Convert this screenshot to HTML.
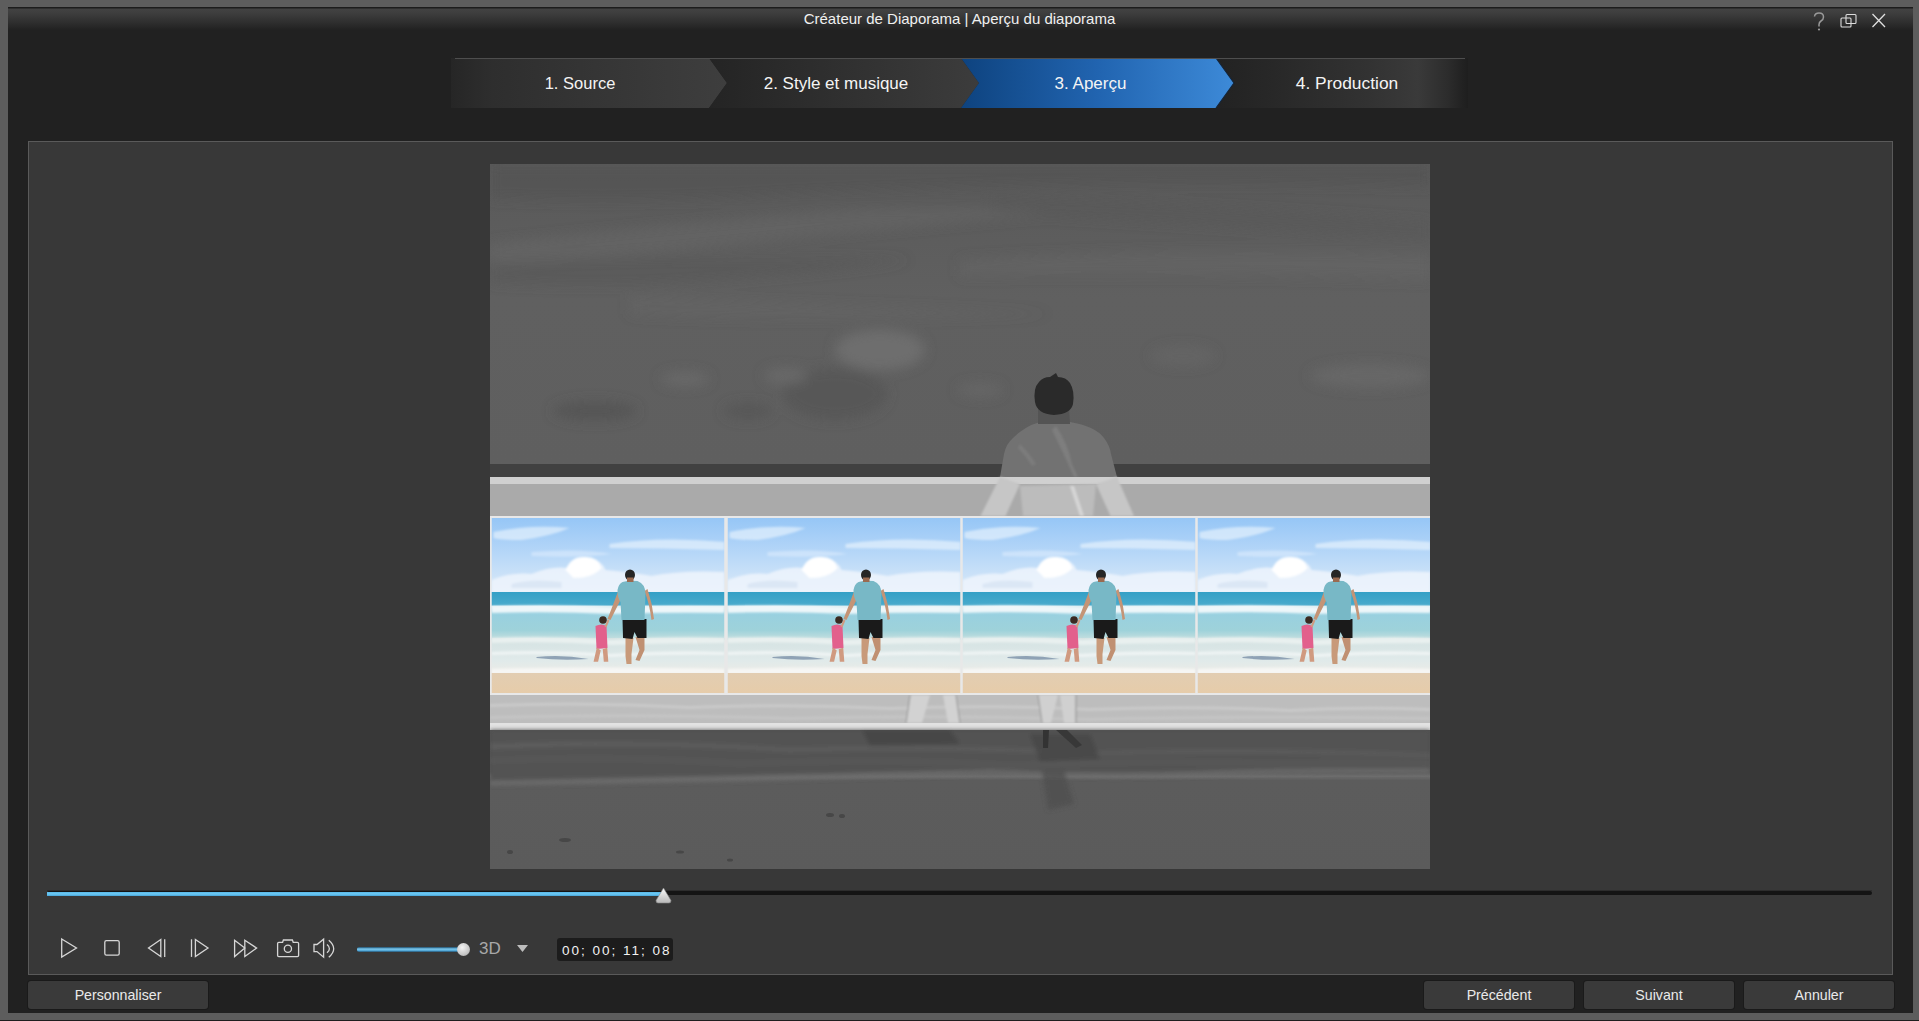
<!DOCTYPE html>
<html><head><meta charset="utf-8">
<style>
*{margin:0;padding:0;box-sizing:border-box}
html,body{width:1919px;height:1021px;overflow:hidden;background:#5d5d5d;font-family:"Liberation Sans",sans-serif}
.a{position:absolute}
#win{left:8px;top:7px;width:1905px;height:1006px;background:#212121}
#tb{left:8px;top:7px;width:1905px;height:23px;background:linear-gradient(#1c1c1c 0,#1c1c1c 1px,#424242 2px,#3e3e3e 6px,#343434 12px,#2a2a2a 18px,#212121 23px)}
#title{left:0;top:11px;width:1919px;text-align:center;color:#f0f0f0;font-size:15px;line-height:16px}
.step{top:59px;height:50px;color:#f4f4f4;font-size:17px;line-height:49px;text-align:center}
#panel{left:28px;top:141px;width:1865px;height:834px;background:#383838;border:1px solid #5a5a5a}
.btn{top:981px;height:28px;background:#3a3a3a;border-radius:3px;color:#eaeaea;font-size:14.2px;line-height:29px;text-align:center;box-shadow:0 0 0 1px #1a1a1a}
</style></head><body>
<div class="a" id="win"></div>
<div class="a" style="left:0;top:1020px;width:1919px;height:1px;background:#1e1e1e"></div>
<div class="a" id="tb"></div>
<div class="a" id="title">Créateur de Diaporama | Aperçu du diaporama</div>

<!-- window controls -->
<svg class="a" style="left:1800px;top:5px" width="100" height="30" viewBox="0 0 100 30">
  <path d="M14.5 11.5 Q15 8 19 8 Q23.5 8 23.5 12 Q23.5 14.5 21 16 Q19 17.3 19 19.5 L19 21.5" fill="none" stroke="#9a9a9a" stroke-width="1.5"/>
  <circle cx="19" cy="24.5" r="1.1" fill="#9a9a9a"/>
  <rect x="46" y="9.5" width="10" height="9" rx="1" fill="none" stroke="#dcdcdc" stroke-width="1.1"/>
  <rect x="41" y="13" width="10" height="9" rx="1" fill="none" stroke="#dcdcdc" stroke-width="1.1"/>
  <path d="M72.5 9 L85 22 M85 9 L72.5 22" stroke="#e0e0e0" stroke-width="1.3"/>
</svg>

<!-- steps -->
<svg class="a" style="left:440px;top:50px" width="1040" height="66" viewBox="440 50 1040 66">
  <defs>
    <linearGradient id="g1" x1="0" x2="1"><stop offset="0" stop-color="#262626"/><stop offset="0.15" stop-color="#2e2e2e"/><stop offset="1" stop-color="#3e3e3e"/></linearGradient>
    <linearGradient id="g2" x1="0" x2="1"><stop offset="0" stop-color="#242424"/><stop offset="1" stop-color="#3c3c3c"/></linearGradient>
    <linearGradient id="g3" x1="0" x2="1"><stop offset="0" stop-color="#0e437f"/><stop offset="0.5" stop-color="#2164b0"/><stop offset="1" stop-color="#3d8ad8"/></linearGradient>
    <linearGradient id="g4" x1="0" x2="1"><stop offset="0" stop-color="#222"/><stop offset="0.3" stop-color="#2a2a2a"/><stop offset="0.6" stop-color="#323232"/><stop offset="0.8" stop-color="#3a3a3a"/><stop offset="0.92" stop-color="#2c2c2c"/><stop offset="1" stop-color="#1e1e1e"/></linearGradient>
  </defs>
  <path d="M451 58 H709 L727 83 L709 108 H451 Z" fill="url(#g1)"/>
  <path d="M709 58 H961 L979 83 L961 108 H709 L727 83 Z" fill="url(#g2)"/>
  <path d="M961 58 H1216 L1234 83 L1216 108 H961 L979 83 Z" fill="url(#g3)"/><path d="M1216 58 L1234 83 L1216 108" fill="none" stroke="#14253a" stroke-width="1.2"/>
  <path d="M1217 58 H1468 V108 H1217 L1235 83 Z" fill="url(#g4)"/>
  <path d="M455 58.5 H1465" stroke="#4e4e4e" stroke-width="1"/>
</svg>
<div class="a step" style="left:451px;width:258px;font-size:16.5px">1. Source</div>
<div class="a step" style="left:709px;width:252px;padding-left:2px">2. Style et musique</div>
<div class="a step" style="left:961px;width:255px;padding-left:4px">3. Aperçu</div>
<div class="a step" style="left:1216px;width:252px;padding-left:10px;font-size:17.4px">4. Production</div>

<div class="a" id="panel"></div>

<!-- PHOTO -->
<svg class="a" id="photo" style="left:490px;top:164px" width="940" height="705" viewBox="0 0 940 705">
  <defs>
    <linearGradient id="sky" x1="0" y1="0" x2="0" y2="1">
      <stop offset="0" stop-color="#595959"/><stop offset="0.45" stop-color="#606060"/><stop offset="1" stop-color="#5f5f5f"/>
    </linearGradient>
    <linearGradient id="beach" x1="0" y1="0" x2="0" y2="1">
      <stop offset="0" stop-color="#505050"/><stop offset="0.3" stop-color="#555555"/><stop offset="0.33" stop-color="#6e6e6e"/><stop offset="0.36" stop-color="#5c5c5c"/><stop offset="1" stop-color="#5b5b5b"/>
    </linearGradient>
    <linearGradient id="psky" x1="0" y1="0" x2="0" y2="1">
      <stop offset="0" stop-color="#96c6f6"/><stop offset="0.5" stop-color="#b8d8f8"/><stop offset="1" stop-color="#dceaf8"/>
    </linearGradient>
    <linearGradient id="psea" x1="0" y1="0" x2="0" y2="1">
      <stop offset="0" stop-color="#34a0c6"/><stop offset="0.27" stop-color="#48aacc"/><stop offset="0.3" stop-color="#d4eaf0"/><stop offset="0.42" stop-color="#98d0e0"/><stop offset="0.8" stop-color="#9ed2da"/><stop offset="1" stop-color="#c8e0e0"/>
    </linearGradient>
    <linearGradient id="pfoam" x1="0" y1="0" x2="0" y2="1">
      <stop offset="0" stop-color="#d4e2e2"/><stop offset="0.6" stop-color="#e0eaea"/><stop offset="1" stop-color="#eeece6"/>
    </linearGradient>
    <linearGradient id="psand" x1="0" y1="0" x2="0" y2="1">
      <stop offset="0" stop-color="#e2cdb2"/><stop offset="1" stop-color="#e6ccaa"/>
    </linearGradient>
    <filter id="blur6" x="-10%" y="-10%" width="120%" height="120%"><feGaussianBlur stdDeviation="6"/></filter>
    <filter id="blur2" x="-10%" y="-10%" width="120%" height="120%"><feGaussianBlur stdDeviation="2"/></filter>
    <filter id="blur1" x="-10%" y="-10%" width="120%" height="120%"><feGaussianBlur stdDeviation="1"/></filter>
    <symbol id="pan" viewBox="0 0 233 175" width="233" height="175">
      <rect width="233" height="75" fill="url(#psky)"/>
      <g filter="url(#blur1)">
      <path d="M2 14 Q40 6 78 10 Q60 18 30 22 Q10 22 2 20 Z" fill="#eef6fe" opacity="0.6"/>
      <path d="M118 26 Q170 18 233 24 L233 32 Q170 30 118 30 Z" fill="#eef6fe" opacity="0.6"/>
      <path d="M40 34 Q90 30 120 36 Q90 40 40 38 Z" fill="#eef6fe" opacity="0.4"/>
      <path d="M0 62 Q20 54 40 56 Q60 48 75 50 Q86 40 98 40 Q110 42 114 52 Q140 54 160 58 Q190 52 233 54 L233 75 L0 75 Z" fill="#eef5fd" opacity="0.85"/>
      <path d="M74 52 Q80 38 93 39 Q106 38 110 50 Q102 60 82 60 Z" fill="#ffffff"/>
      <path d="M20 66 Q40 60 70 64 L70 70 L20 70 Z" fill="#d4e2f2" opacity="0.7"/>
      </g>
      <rect y="74" width="233" height="48" fill="url(#psea)"/>
      <rect y="120" width="233" height="37" fill="url(#pfoam)"/>
      <g filter="url(#blur1)">
      <path d="M0 88 Q60 86 120 89 Q180 87 233 88 L233 95 Q180 94 120 96 Q60 93 0 95 Z" fill="#f4fafc" opacity="0.9"/>
      <path d="M0 120 Q60 117 120 122 Q180 118 233 120 L233 125 Q180 125 120 127 Q60 123 0 125 Z" fill="#eef4f2" opacity="0.8"/>
      <path d="M0 134 Q60 131 120 136 Q180 132 233 134 L233 137 Q180 136 120 139 Q60 135 0 137 Z" fill="#f6fafa" opacity="0.7"/>
      <path d="M0 151 Q100 148 233 151 L233 156 L0 156 Z" fill="#f6f6f4"/>
      </g>
      <rect y="155" width="233" height="20" fill="url(#psand)"/>
      <path d="M45 139 Q70 136 97 141 Q70 143 45 140 Z" fill="#7a90a8" opacity="0.8"/>
      <!-- man -->
      <path d="M134 119 L134 138 L135 146 L140 146 L140 136 L142 120 Z" fill="#c89a7a"/>
      <path d="M144 119 L148 132 L144 142 L148 143 L153 132 L153 119 Z" fill="#c09072"/>
      <path d="M131 101 L155 101 L155 120 L146 120 L143 114 L141 121 L131.5 120 Z" fill="#1a1a1a"/>
      <path d="M127 72 Q122 86 116 101 L119 102 Q126 88 131 78 Z" fill="#c49476"/>
      <path d="M153 73 Q158 86 160 102 L162.5 101 Q161 86 156 71 Z" fill="#c49476"/>
      <path d="M131 64 Q138 62 146 63 Q154 66 154 76 L153 102 L130 102 L129 84 Q126 80 126 72 Q127 66 131 64 Z" fill="#78b8c6"/>
      <ellipse cx="138.5" cy="57" rx="5" ry="5.5" fill="#262626"/>
      <rect x="135.5" y="59.5" width="6.5" height="4.5" fill="#9a6a50"/>
      <!-- girl -->
      <path d="M104 108 Q110 105 115 108 L116 130 L105 131 Z" fill="#e2608c"/>
      <path d="M106 130 L103 143 L106 143 L108.5 132 M112 131 L113 143 L116 143 L115 130" fill="#d09a80" stroke="#d09a80" stroke-width="1.5"/>
      <circle cx="111.5" cy="102" r="3.8" fill="#3a2a22"/>
      <path d="M114 109 L117 102" stroke="#d09a80" stroke-width="2"/>
    </symbol>
    <linearGradient id="torso" x1="0" y1="0" x2="0" y2="1">
      <stop offset="0" stop-color="#7a7a7a"/><stop offset="1" stop-color="#808080"/>
    </linearGradient>
  </defs>
  <rect width="940" height="300" fill="url(#sky)"/>
  <g filter="url(#blur6)">
    <path d="M0 0 H940 V22 Q600 14 300 30 Q150 40 0 34 Z" fill="#545454" opacity="0.6"/>
    <path d="M0 80 Q160 62 330 48 Q480 38 560 50 Q400 64 250 80 Q120 94 0 98 Z" fill="#6a6a6a" opacity="0.5"/>
    <path d="M0 102 Q200 90 420 96 Q300 114 150 120 Q60 122 0 118 Z" fill="#565656" opacity="0.5"/>
    <path d="M470 96 Q700 82 940 90 V116 Q700 108 470 112 Z" fill="#686868" opacity="0.45"/>
    <path d="M500 32 Q700 40 940 58 V76 Q700 60 500 48 Z" fill="#575757" opacity="0.45"/>
    <path d="M140 132 Q300 140 560 150 Q300 158 140 150 Z" fill="#686868" opacity="0.4"/>
    <ellipse cx="390" cy="186" rx="45" ry="20" fill="#727272" opacity="0.8"/>
    <ellipse cx="345" cy="230" rx="52" ry="26" fill="#555555" opacity="0.7"/>
    <ellipse cx="105" cy="247" rx="42" ry="10" fill="#535353" opacity="0.7"/>
    <ellipse cx="258" cy="247" rx="24" ry="8" fill="#545454" opacity="0.7"/>
    <ellipse cx="195" cy="215" rx="24" ry="7" fill="#6c6c6c" opacity="0.7"/>
    <ellipse cx="296" cy="212" rx="22" ry="8" fill="#6c6c6c" opacity="0.7"/>
    <ellipse cx="880" cy="212" rx="60" ry="12" fill="#6c6c6c" opacity="0.6"/>
    <ellipse cx="490" cy="226" rx="22" ry="7" fill="#6a6a6a" opacity="0.6"/>
    <ellipse cx="693" cy="192" rx="32" ry="10" fill="#686868" opacity="0.5"/>
  </g>
  <!-- sea band -->
  <rect y="300" width="940" height="13" fill="#414141"/>
  <!-- gray man upper -->
  <path d="M550 258 L580 258 Q605 262 614 274 Q620 282 621 290 L627 313 L510 313 L514 290 Q516 280 523 274 Q535 262 550 258 Z" fill="#727272"/>
  <g filter="url(#blur1)" opacity="0.5">
    <path d="M566 262 Q578 280 582 300 L588 313 L584 313 Q574 290 562 266 Z" fill="#8a8a8a"/>
    <path d="M530 280 Q540 290 546 300 L542 302 Q536 292 528 284 Z" fill="#868686"/>
  </g>
  <rect y="313" width="940" height="7" fill="#d0d0d0"/>
  <rect y="320" width="940" height="32" fill="#aaaaaa"/>
  <g filter="url(#blur1)">
  <path d="M510 313 L530 320 L515.5 352 L490.5 352 Z" fill="#c6c6c6"/>
  <path d="M530 322 L606 320 L603 352 L533 352 Z" fill="#bcbcbc"/>
  <path d="M627 313 L606 320 L620.5 352 L644 352 Z" fill="#c6c6c6"/>
  <path d="M580 322 L590 352 L594 352 L584 322 Z" fill="#d6d6d6"/>
  </g>
  <path d="M548 244 L579 244 L580 260 L548 260 Z" fill="#545454"/>
  <path d="M545 238 Q543 224 549 218 Q553 213 560 213 L566 209 L568 213 Q576 213 580 219 Q585 227 583 240 Q581 250 564 251 Q547 250 545 238 Z" fill="#2a2a2a"/>
  <!-- lower gray -->
  <rect y="531" width="940" height="28" fill="#bdbdbd"/>
  <g filter="url(#blur1)">
    <path d="M0 540 Q100 536 200 542 Q300 538 400 543 Q500 539 600 544 Q700 540 800 545 Q870 541 940 544 V547 Q870 544 800 548 Q700 543 600 547 Q500 542 400 546 Q300 541 200 545 Q100 539 0 543 Z" fill="#cfcfcf" opacity="0.7"/>
    <path d="M0 552 Q150 548 300 553 Q450 549 600 554 Q750 550 940 553 V556 Q750 553 600 557 Q450 552 300 556 Q150 551 0 555 Z" fill="#c8c8c8" opacity="0.7"/>
    <path d="M421 531 L440 531 L432 559 L416 559 Z M453 531 L466 531 L470 559 L458 559 Z" fill="#d2d2d2"/>
    <path d="M548 531 L568 531 L561 559 L552 559 Z M570 531 L585 531 L585 559 L574 559 Z" fill="#d0d0d0"/>
    <path d="M420 531 L416 559 M466 531 L470 559 M548 531 L552 559 M586 531 L586 559" stroke="#9a9a9a" stroke-width="1.2"/>
  </g>
  <rect y="559" width="940" height="7" fill="#e2e2e2"/>
  <rect y="566" width="940" height="140" fill="url(#beach)"/>
  <g filter="url(#blur2)">
  <path d="M0 566 H940 V607 Q800 605 700 609 Q600 613 500 607 Q300 613 0 619 Z" fill="#525252"/>
  <path d="M0 617 Q300 611 500 606 Q600 611 700 608 Q800 604 940 605 V609 Q800 608 700 612 Q600 615 500 610 Q300 617 0 621 Z" fill="#6e6e6e"/>
  <path d="M0 580 Q150 574 300 584 Q450 579 600 588 Q750 582 940 590 V593 Q750 586 600 591 Q450 583 300 588 Q150 578 0 585 Z" fill="#5e5e5e"/>
  <path d="M0 595 Q120 590 250 598 Q400 592 520 600 Q650 594 800 598 Q870 596 940 598 V601 Q870 599 800 601 Q650 597 520 603 Q400 595 250 601 Q120 593 0 598 Z" fill="#5c5c5c"/>
  <path d="M372 566 L460 566 L470 580 L380 582 Z" fill="#474747"/>
  <path d="M540 570 L600 570 L610 595 L550 598 Z" fill="#474747" opacity="0.8"/>
  <path d="M552 608 L574 606 L584 640 L558 646 Z" fill="#505050" opacity="0.8"/>
  </g>
  <path d="M553 566 L559 566 L558 584 L553 584 Z" fill="#333"/>
  <path d="M566 566 L577 566 L592 581 L586 584 Z" fill="#383838"/>
  <g fill="#474747">
  <ellipse cx="340" cy="651" rx="4" ry="2"/><ellipse cx="352" cy="652" rx="3" ry="2"/>
  <ellipse cx="75" cy="676" rx="6" ry="2"/><ellipse cx="20" cy="688" rx="3" ry="2"/>
  <ellipse cx="190" cy="688" rx="4" ry="1.5"/><ellipse cx="240" cy="696" rx="3" ry="1.5"/>
  </g>
  <!-- frame -->
  <rect y="352" width="940" height="179" fill="#e8e8e8"/>
  <use href="#pan" x="1.5" y="354"/>
  <use href="#pan" x="237.5" y="354"/>
  <use href="#pan" x="472.5" y="354"/>
  <use href="#pan" x="707.5" y="354"/>
</svg>

<!-- progress -->
<div class="a" style="left:47px;top:890px;width:1825px;height:1px;background:#2c2c2c"></div>
<div class="a" style="left:47px;top:891px;width:1825px;height:4px;background:#141414;border-radius:2px"></div>
<div class="a" style="left:47px;top:892px;width:617px;height:4px;background:linear-gradient(#5ab8e8,#6ccaf4 50%,#48a4d8)"></div>
<svg class="a" style="left:654px;top:886px" width="20" height="20" viewBox="0 0 20 20">
  <defs><linearGradient id="th" x1="0" y1="0" x2="0" y2="1"><stop offset="0" stop-color="#fafafa"/><stop offset="1" stop-color="#b8b8b8"/></linearGradient></defs>
  <path d="M9.5 2 L17 14.5 Q17 17 15 17 H4 Q2 17 2 14.5 Z" fill="url(#th)" stroke="#888" stroke-width="0.6"/>
</svg>

<!-- controls -->
<svg class="a" style="left:40px;top:925px" width="320" height="45" viewBox="40 925 320 45">
  <g fill="none" stroke="#d6d6d6" stroke-width="1.3" stroke-linejoin="miter">
    <path d="M61.7 939 L76.5 948 L61.7 957 Z"/>
    <rect x="104.8" y="940.6" width="14.4" height="14.6" rx="1.6"/>
    <path d="M160.8 939.5 L148.5 948 L160.8 956.6 Z"/>
    <path d="M164.7 939.3 V956.9"/>
    <path d="M191.5 939.3 V956.9"/>
    <path d="M195.4 939.5 L208 948 L195.4 956.6 Z"/>
    <path d="M234.6 940.2 L244.8 948 L234.6 956.5 Z"/>
    <path d="M244.8 940.2 L256.6 948 L244.8 956.5 Z"/>
    <path d="M277.6 943.5 Q277.6 942.3 278.8 942.3 H282.6 L283.4 940 H292.4 L293.2 942.3 H297.4 Q298.6 942.3 298.6 943.5 V955.6 Q298.6 956.7 297.4 956.7 H278.8 Q277.6 956.7 277.6 955.6 Z"/>
    <circle cx="287.9" cy="948.8" r="3.6"/>
    <path d="M314 944.5 H317 L323.6 939.2 V957.2 L317 951.6 H314 Z"/>
    <path d="M327 944.5 Q331.8 948.6 327 952.8"/>
    <path d="M328.8 940.2 Q338.6 948.6 328.8 957.2"/>
  </g>
</svg>
<!-- volume slider -->
<div class="a" style="left:357px;top:947px;width:107px;height:5px;background:linear-gradient(#1a4a6a,#7ccaf0 40%,#4aa0d0 80%,#20405a);border-radius:2px"></div>
<div class="a" style="left:457px;top:942.5px;width:13px;height:13px;border-radius:50%;background:radial-gradient(circle at 40% 35%,#f4f4f4,#c8c8c8 60%,#9a9a9a)"></div>
<div class="a" style="left:479px;top:939px;color:#a8a8a8;font-size:17px;line-height:20px">3D</div>
<svg class="a" style="left:515px;top:942px" width="15" height="12" viewBox="0 0 15 12"><path d="M2 3 H13 L7.5 10 Z" fill="#bdbdbd"/></svg>
<div class="a" style="left:557px;top:938px;width:116px;height:23px;background:#1c1c1c;border-radius:3px"></div>
<div class="a" style="left:562px;top:939px;height:23px;color:#f2f2f2;font-size:13.5px;line-height:23px;letter-spacing:2px;white-space:pre">00; 00; 11; 08</div>

<!-- buttons -->
<div class="a btn" style="left:28px;width:180px">Personnaliser</div>
<div class="a btn" style="left:1424px;width:150px">Précédent</div>
<div class="a btn" style="left:1584px;width:150px">Suivant</div>
<div class="a btn" style="left:1744px;width:150px">Annuler</div>

</body></html>
